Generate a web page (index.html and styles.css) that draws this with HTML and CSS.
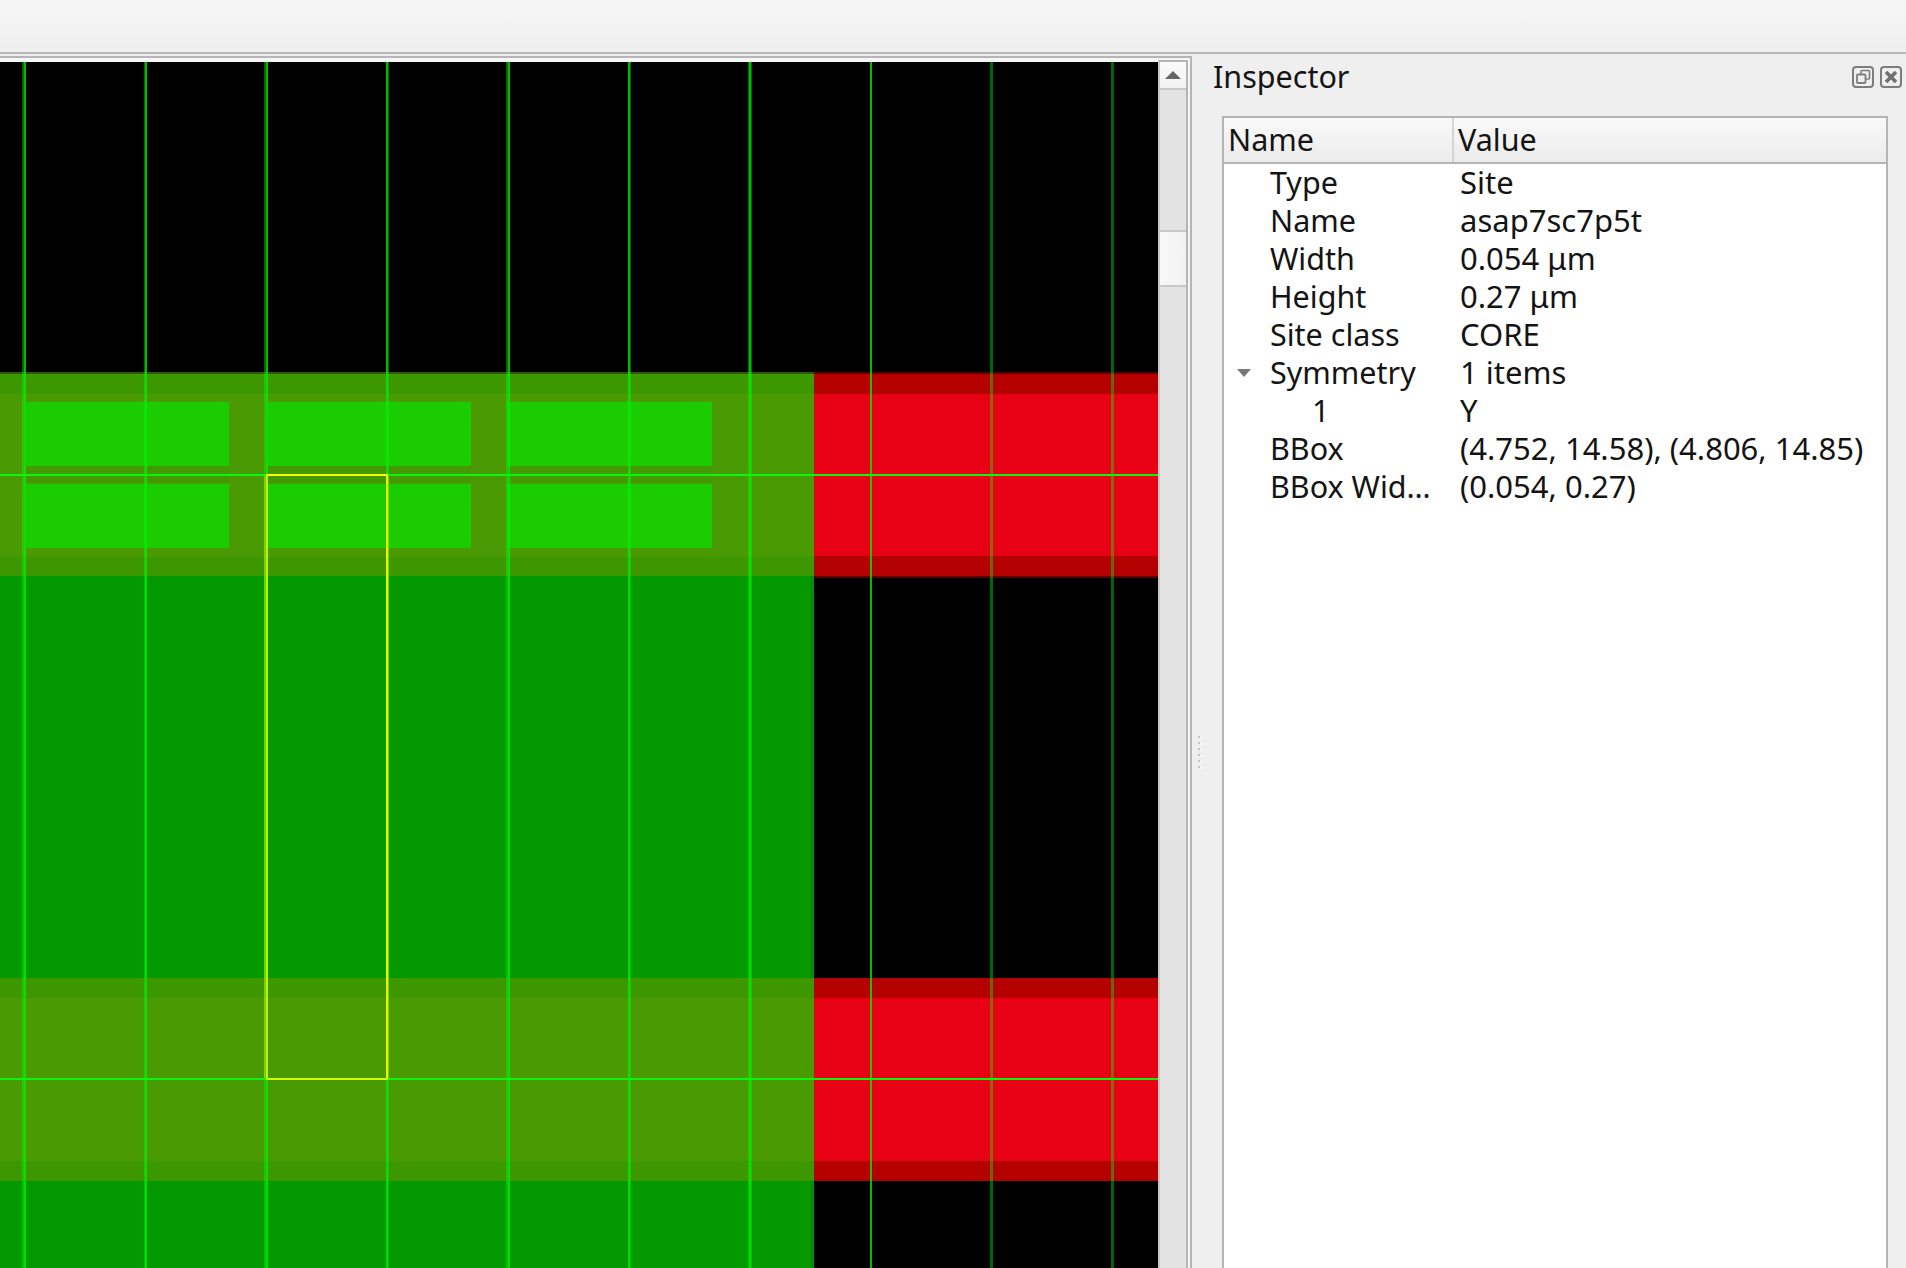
FILE: index.html
```html
<!DOCTYPE html>
<html lang="en">
<head>
<meta charset="utf-8">
<title>Inspector</title>
<link rel="stylesheet" href="styles.css">
</head>
<body>
<header class="toolbar"></header>
<main class="main">
  <section class="view-dock">
    <div class="view-frame">
      <svg class="canvas" viewBox="0 62 1158 1206" width="1158" height="1206" shape-rendering="crispEdges" aria-label="layout view">
        <rect class="c-black" x="0" y="62" width="1158" height="1206"/>
        <!-- green core -->
        <rect class="c-core" x="0" y="372" width="814" height="896"/>
        <rect class="c-core-edge" x="810" y="576" width="4" height="692"/>
        <!-- rows -->
        <rect class="c-edge-g" x="0" y="372" width="814" height="2"/>
        <rect class="c-edge-r" x="814" y="372" width="344" height="2"/>
        <rect class="c-band-d" x="0" y="374" width="814" height="20"/>
        <rect class="c-band" x="0" y="394" width="814" height="163"/>
        <rect class="c-band-d" x="0" y="557" width="814" height="19"/>
        <rect class="c-red-d" x="814" y="374" width="344" height="20"/>
        <rect class="c-red" x="814" y="394" width="344" height="162"/>
        <rect class="c-red-d" x="814" y="556" width="344" height="20"/>
        <rect class="c-edge-r" x="814" y="576" width="344" height="2"/>
        <rect class="c-band-d" x="0" y="978" width="814" height="20"/>
        <rect class="c-band" x="0" y="998" width="814" height="163"/>
        <rect class="c-band-d" x="0" y="1161" width="814" height="20"/>
        <rect class="c-red-d" x="814" y="978" width="344" height="20"/>
        <rect class="c-red" x="814" y="998" width="344" height="163"/>
        <rect class="c-red-d" x="814" y="1161" width="344" height="20"/>
        <!-- pins -->
        <rect class="c-gap" x="26" y="466" width="203" height="17"/>
        <rect class="c-gap" x="268" y="466" width="203" height="17"/>
        <rect class="c-gap" x="507" y="466" width="205" height="17"/>
        <rect class="c-pin" x="26" y="402" width="203" height="64"/>
        <rect class="c-pin" x="26" y="484" width="203" height="64"/>
        <rect class="c-pin" x="268" y="402" width="203" height="64"/>
        <rect class="c-pin" x="268" y="484" width="203" height="64"/>
        <rect class="c-pin" x="507" y="402" width="205" height="64"/>
        <rect class="c-pin" x="507" y="484" width="205" height="64"/>
        <!-- site grid -->
        <g class="c-dim">
          <rect x="22" y="62" width="2" height="1206"/>
          <rect x="144" y="62" width="1" height="1206"/>
          <rect x="264" y="62" width="2" height="1206"/>
          <rect x="388" y="62" width="1" height="1206"/>
          <rect x="506" y="62" width="2" height="1206"/>
          <rect x="630" y="62" width="1" height="1206"/>
          <rect x="748" y="62" width="1" height="1206"/>
          <rect x="751" y="62" width="1" height="1206"/>
          <rect x="990" y="62" width="3" height="1206"/>
          <rect x="1111" y="62" width="3" height="1206"/>
        </g>
        <g class="c-line">
          <rect x="24" y="62" width="2" height="1206"/>
          <rect x="145" y="62" width="2" height="1206"/>
          <rect x="266" y="62" width="2" height="1206"/>
          <rect x="386" y="62" width="2" height="1206"/>
          <rect x="508" y="62" width="2" height="1206"/>
          <rect x="628" y="62" width="2" height="1206"/>
          <rect x="749" y="62" width="2" height="1206"/>
          <rect x="870" y="62" width="2" height="1206"/>
        </g>
        <rect class="c-hline" x="0" y="474" width="1158" height="2"/>
        <rect class="c-hline" x="0" y="1078" width="1158" height="2"/>
        <!-- selected site -->
        <rect class="c-sel-dim" x="264" y="476" width="2" height="602"/>
        <rect class="c-sel-dim" x="388" y="476" width="1" height="602"/>
        <rect class="c-sel-l" x="266" y="474" width="2" height="606"/>
        <rect class="c-sel-r" x="386" y="474" width="2" height="606"/>
        <rect class="c-sel-t" x="266" y="474" width="122" height="2"/>
        <rect class="c-sel-b" x="266" y="1078" width="122" height="2"/>
      </svg>
      <div class="scrollbar">
        <div class="scroll-btn"><span class="scroll-arrow"></span></div>
        <div class="scroll-trough scroll-trough-top"></div>
        <div class="scroll-handle"></div>
        <div class="scroll-trough scroll-trough-rest"></div>
      </div>
    </div>
  </section>
  <div class="splitter"><span class="grip"></span><span class="grip"></span><span class="grip"></span><span class="grip"></span><span class="grip"></span><span class="grip"></span></div>
  <aside class="inspector">
    <div class="dock-title">
      <span class="dock-label">Inspector</span>
      <svg class="dock-btn" viewBox="0 0 22 22" width="22" height="22" aria-label="float">
        <rect x="1" y="1" width="20" height="20" rx="3" fill="none" stroke="#7d7d7d" stroke-width="2"/>
        <rect x="9" y="4.5" width="8.5" height="8.5" rx="1" fill="none" stroke="#7d7d7d" stroke-width="1.6"/>
        <rect x="5" y="8.5" width="8.5" height="8.5" rx="1" fill="#efefef" stroke="#7d7d7d" stroke-width="1.8"/>
      </svg>
      <svg class="dock-btn dock-close" viewBox="0 0 22 22" width="22" height="22" aria-label="close">
        <rect x="1" y="1" width="20" height="20" rx="3" fill="none" stroke="#7d7d7d" stroke-width="2"/>
        <path d="M6 6 16 16M16 6 6 16" fill="none" stroke="#6f6f6f" stroke-width="3.6"/>
      </svg>
    </div>
    <div class="tree">
      <div class="tree-head">
        <div class="head-cell head-name">Name</div>
        <div class="head-cell head-value">Value</div>
      </div>
      <div class="tree-row"><span class="key">Type</span><span class="val">Site</span></div>
      <div class="tree-row"><span class="key">Name</span><span class="val">asap7sc7p5t</span></div>
      <div class="tree-row"><span class="key">Width</span><span class="val">0.054 μm</span></div>
      <div class="tree-row"><span class="key">Height</span><span class="val">0.27 μm</span></div>
      <div class="tree-row"><span class="key">Site class</span><span class="val">CORE</span></div>
      <div class="tree-row"><span class="key key-parent"><i class="twisty"></i>Symmetry</span><span class="val">1 items</span></div>
      <div class="tree-row"><span class="key key-child">1</span><span class="val">Y</span></div>
      <div class="tree-row"><span class="key">BBox</span><span class="val">(4.752, 14.58), (4.806, 14.85)</span></div>
      <div class="tree-row"><span class="key">BBox Wid…</span><span class="val">(0.054, 0.27)</span></div>
    </div>
  </aside>
</main>
</body>
</html>
```
FILE: styles.css
```css
* { box-sizing: border-box; }
html, body { margin: 0; height: 100%; overflow: hidden; }
body {
  display: flex;
  flex-direction: column;
  background: #efefef;
  color: #141414;
  font-family: "Noto Sans", "Open Sans", sans-serif;
  font-size: 30.5px;
}
.toolbar {
  height: 54px;
  flex: none;
  background: linear-gradient(#f6f6f6, #efefef);
  border-bottom: 2px solid #b8b8b8;
}
.main { flex: 1; display: flex; min-height: 0; }

.view-dock {
  width: 1192px;
  flex: none;
  padding: 2px 0 0;
}
.view-frame {
  height: 100%;
  display: flex;
  background: #f5f5f5;
  border-top: 2px solid #b5b5b5;
  border-right: 2px solid #b5b5b5;
  padding: 2px 2px 0 0;
  position: relative;
}
.canvas { display: block; flex: none; margin-top: 2px; }

.scrollbar {
  width: 30px;
  flex: none;
  display: flex;
  flex-direction: column;
  border-top: 2px solid #b5b5b5;
  border-left: 2px solid #c9c9c9;
  border-right: 2px solid #b5b5b5;
  background: #e3e3e3;
}
.scroll-btn {
  height: 28px;
  flex: none;
  display: flex;
  align-items: center;
  justify-content: center;
  background: linear-gradient(#fbfbfb, #f2f2f2);
  border-bottom: 2px solid #c9c9c9;
}
.scroll-arrow {
  width: 0;
  height: 0;
  border-left: 8px solid transparent;
  border-right: 8px solid transparent;
  border-bottom: 8px solid #666;
}
.scroll-trough { background: #e3e3e3; }
.scroll-trough-top { height: 140px; flex: none; }
.scroll-handle {
  height: 57px;
  flex: none;
  background: linear-gradient(90deg, #f8f8f8, #f2f2f2);
  border-top: 2px solid #c9c9c9;
  border-bottom: 2px solid #c9c9c9;
}
.scroll-trough-rest { flex: 1; }

.c-black { fill: #000; }
.c-core { fill: #049900; }
.c-core-edge { fill: #039000; }
.c-edge-g { fill: #2c5c00; }
.c-edge-r { fill: #5c0000; }
.c-band { fill: #4a9a04; }
.c-band-d { fill: #3d9800; }
.c-red { fill: #e80014; }
.c-red-d { fill: #b50000; }
.c-gap { fill: #439a00; }
.c-pin { fill: #1acc00; }
.c-dim rect { fill: #00ff00; fill-opacity: 0.4; }
.c-line rect { fill: #00f000; fill-opacity: 0.78; }
.c-hline { fill: #0cf50c; }
.c-sel-dim { fill: #b4e000; fill-opacity: 0.6; }
.c-sel-l { fill: #bdf000; }
.c-sel-r { fill: #e4f500; }
.c-sel-t { fill: #ffff00; }
.c-sel-b { fill: #ccff00; }

.splitter {
  width: 30px;
  flex: none;
  display: flex;
  flex-direction: column;
  align-items: center;
  justify-content: center;
  gap: 4px;
  padding-top: 182px;
  padding-right: 17px;
  margin-right: -30px;
  position: relative;
  z-index: 1;
  height: 100%;
}
.grip {
  width: 2px;
  height: 2px;
  background: #c4c4c4;
  box-shadow: 2px 1px 0 #f8f8f8;
}

.inspector {
  flex: 1;
  min-width: 0;
  display: flex;
  flex-direction: column;
  padding-left: 30px;
  padding-right: 18px;
}
.dock-title {
  height: 62px;
  flex: none;
  display: flex;
  align-items: flex-start;
  margin-right: -18px;
}
.dock-label {
  margin-left: -9px;
  line-height: 40px;
  margin-top: 2px;
  margin-right: auto;
}
.dock-btn { margin-top: 12px; flex: none; }
.dock-close { margin-left: 6px; margin-right: 4px; }

.tree {
  flex: 1;
  background: #fff;
  border: 2px solid #b5b5b5;
  border-bottom: 0;
}
.tree-head {
  display: grid;
  grid-template-columns: 230px 1fr;
  height: 46px;
  background: linear-gradient(#f9f9f9, #f1f1f1 60%, #ebebeb);
  border-bottom: 2px solid #b5b5b5;
}
.head-cell { line-height: 42px; }
.head-name { padding-left: 4px; border-right: 2px solid #d4d4d4; }
.head-value { padding-left: 4px; }
.tree-row {
  display: grid;
  grid-template-columns: 230px 1fr;
  height: 38px;
  line-height: 36px;
  white-space: nowrap;
}
.key { padding-left: 46px; position: relative; }
.key-child { padding-left: 88px; }
.val { padding-left: 6px; font-size: 31px; }
.twisty {
  position: absolute;
  left: 13px;
  top: 15px;
  width: 0;
  height: 0;
  border-left: 7px solid transparent;
  border-right: 7px solid transparent;
  border-top: 8px solid #777;
}
```
